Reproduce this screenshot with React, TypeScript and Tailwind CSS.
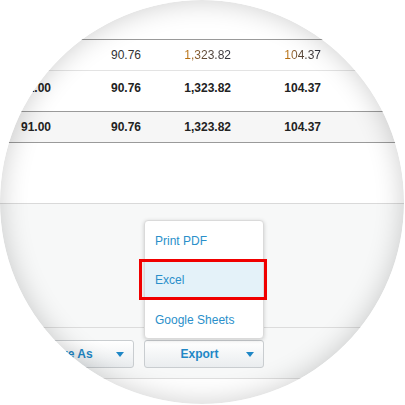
import React from "react";

// Magnified view of a totals table with the Export dropdown open (Excel highlighted).

const font = "font-['Liberation_Sans',Arial,sans-serif]";

function Caret() {
  return (
    <svg width="8" height="5" viewBox="0 0 8 5" className="shrink-0">
      <path d="M0 0h8L4 5z" fill="#1f87c6" />
    </svg>
  );
}

function Warm({ children }: { children: React.ReactNode }) {
  return (
    <span className="inline-block bg-gradient-to-r from-[#b8700f] from-10% via-[#5a4634] via-45% to-[#2c3140] bg-clip-text text-transparent">
      {children}
    </span>
  );
}

function Btn({ label, className = "" }: { label: string; className?: string }) {
  return (
    <div
      className={`flex h-[28px] w-[120px] items-center rounded-[3px] border border-[#c9cdd0] bg-gradient-to-b from-white to-[#eaedef] pl-[8px] pr-[9px] ${className}`}
    >
      <span className="flex-1 text-center text-[12px] font-bold text-[#1f87c6]">{label}</span>
      <Caret />
    </div>
  );
}

export default function App() {
  return (
    <div className={`h-[405px] w-[405px] bg-white ${font}`}>
      <div className="relative h-[404px] w-[404px] overflow-hidden rounded-full bg-white">
        <div className="h-[39px]" />

        {/* table rows */}
        <div className="border-t border-[#9a9a9a]">
          <div className="grid h-[31px] grid-cols-[51px_90px_90px_90px] items-center border-b border-[#e3e3e3] text-right text-[12px] text-[#333]">
            <span />
            <span>90.76</span>
            <span><Warm>1,323.82</Warm></span>
            <span><Warm>104.37</Warm></span>
          </div>
          <div className="grid h-[41px] grid-cols-[51px_90px_90px_90px] border-b border-[#9a9a9a] pt-[8px] text-right text-[12px] font-bold text-[#222]">
            <span>91.00</span>
            <span>90.76</span>
            <span>1,323.82</span>
            <span>104.37</span>
          </div>
          <div className="grid h-[31px] grid-cols-[51px_90px_90px_90px] items-center border-b border-[#9a9a9a] bg-[#f6f6f6] text-right text-[12px] font-bold text-[#222]">
            <span>91.00</span>
            <span>90.76</span>
            <span>1,323.82</span>
            <span>104.37</span>
          </div>
        </div>

        <div className="h-[60px]" />

        {/* footer */}
        <div className="border-t border-[#d9d9d9] bg-[#f7f8f8]">
          <div className="h-[123px]" />
          <div className="flex h-[51px] gap-[10px] border-t border-[#dcdcdc] pl-[14px] pt-[12px]">
            <Btn label="Save As" />
            <div className="relative">
              <Btn label="Export" />
              <div className="absolute bottom-[calc(100%+1px)] left-0 h-[119px] w-[120px] rounded-[4px] border border-[#dadada] bg-white shadow-[0_1px_4px_rgba(0,0,0,0.18)]">
                <div className="flex h-[39px] items-center pl-[10px] text-[12px] text-[#2a8fca]">Print PDF</div>
                <div className="flex h-[40px] items-center bg-[#e4f2f9] pl-[10px] text-[12px] text-[#2a8fca]">Excel</div>
                <div className="flex h-[39px] items-center pl-[10px] text-[12px] text-[#2a8fca]">Google Sheets</div>
                <div className="absolute left-[-6px] right-[-4px] top-[38px] h-[41px] border-[3px] border-[#f00000]" />
              </div>
            </div>
          </div>
          <div className="h-[40px] border-t border-[#dedede] bg-white" />
        </div>

        {/* lens rim */}
        <div className="pointer-events-none absolute inset-0 rounded-full shadow-[inset_0_0_28px_rgba(0,0,0,0.2)]" />
      </div>
    </div>
  );
}
